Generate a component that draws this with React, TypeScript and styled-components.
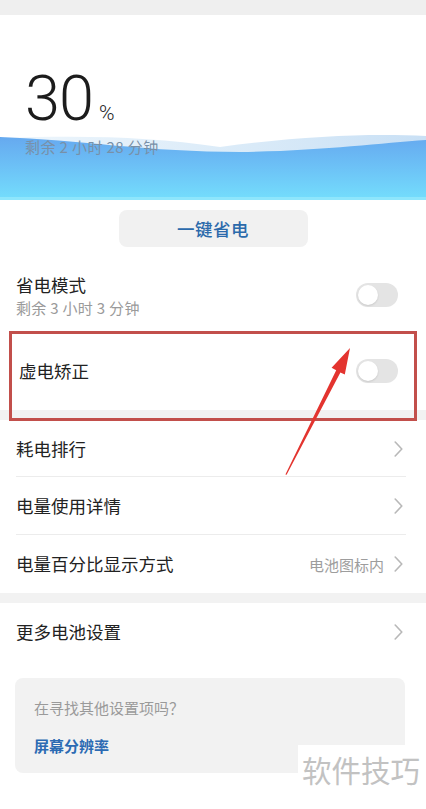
import React from "react";
import styled, { createGlobalStyle } from "styled-components";

const GlobalStyle = createGlobalStyle`
  html, body {
    margin: 0;
    padding: 0;
    background: #ffffff;
  }
  body {
    font-family: "Noto Sans CJK SC", "Noto Sans", sans-serif;
    color: #222;
  }
`;

const StPage = styled.main`
  position: relative;
  width: 426px;
  height: 809px;
  overflow: hidden;
  background: #fff;
  display: flex;
  flex-direction: column;
`;

const StTopBar = styled.div`
  height: 15px;
  background: #efefef;
  flex-shrink: 0;
`;

const StHero = styled.section`
  position: relative;
  height: 185px;
  flex-shrink: 0;
  overflow: hidden;
  background: #fff;
`;

const StWave = styled.svg`
  position: absolute;
  left: 0;
  bottom: 0;
  width: 426px;
  height: 66px;
  display: block;
`;

const StHeroText = styled.div`
  position: relative;
  padding: 52px 0 0 25px;
  display: flex;
  flex-direction: column;
`;

const StPercent = styled.div`
  display: flex;
  align-items: baseline;
  height: 63px;
  font-family: Roboto, "Liberation Sans", sans-serif;
  font-weight: 300;
  font-size: 63px;
  line-height: 63px;
  color: #1c1c1c;
  letter-spacing: -1px;
`;

const StUnit = styled.span`
  font-size: 21px;
  line-height: 1;
  margin-left: 6px;
  letter-spacing: 0;
`;

const StRemain = styled.div`
  margin-top: 7px;
  font-size: 15px;
  line-height: 20px;
  color: #7890a8;
  letter-spacing: 0.4px;
`;

const StButtonArea = styled.div`
  height: 58px;
  display: flex;
  justify-content: center;
  padding-top: 10px;
  box-sizing: border-box;
  flex-shrink: 0;
`;

const StSaveButton = styled.button`
  width: 189px;
  height: 37px;
  border: none;
  border-radius: 8px;
  background: #f1f1f1;
  color: #2b6aab;
  font-family: "Noto Sans CJK SC", sans-serif;
  font-size: 17.5px;
  font-weight: 500;
  letter-spacing: 0.5px;
  padding: 0;
  cursor: pointer;
`;

const StRow = styled.div<{ $height: number; $divider?: boolean; $indent?: number }>`
  position: relative;
  height: ${(p) => p.$height}px;
  flex-shrink: 0;
  display: flex;
  align-items: center;
  justify-content: space-between;
  padding: 0 23px 0 ${(p) => p.$indent ?? 16}px;
  box-sizing: border-box;
  &::after {
    content: "";
    display: ${(p) => (p.$divider ? "block" : "none")};
    position: absolute;
    left: 16px;
    right: 20px;
    bottom: 0;
    height: 1px;
    background: #ececec;
  }
`;

const StRowText = styled.div`
  display: flex;
  flex-direction: column;
  gap: 1px;
`;

const StTitle = styled.div`
  font-size: 17.5px;
  line-height: 24px;
  color: #222;
`;

const StSub = styled.div`
  font-size: 15px;
  line-height: 20px;
  color: #9a9a9a;
  letter-spacing: 0.3px;
`;

const StTrail = styled.div`
  display: flex;
  align-items: center;
  gap: 10px;
`;

const StValue = styled.span`
  font-size: 15px;
  color: #9d9d9d;
`;

const StToggle = styled.div`
  width: 42px;
  height: 24px;
  border-radius: 12px;
  background: #e4e4e4;
  margin-right: 5px;
  display: flex;
  align-items: center;
  padding: 0 2px;
  box-sizing: border-box;
`;

const StKnob = styled.div`
  width: 20px;
  height: 20px;
  border-radius: 50%;
  background: #fff;
  box-shadow: 0 1px 2px rgba(0, 0, 0, 0.12);
`;

const StGap = styled.div`
  height: 10px;
  background: #f2f2f2;
  flex-shrink: 0;
`;

const StCard = styled.section`
  margin: 18px 21px 0 15px;
  height: 95px;
  box-sizing: border-box;
  padding: 20px 19px 0;
  background: #f2f2f2;
  border-radius: 8px;
  display: flex;
  flex-direction: column;
  gap: 18px;
  flex-shrink: 0;
`;

const StHint = styled.div`
  font-size: 15px;
  line-height: 20px;
  color: #9a9a9a;
`;

const StLink = styled.div`
  font-size: 15px;
  line-height: 20px;
  font-weight: 700;
  color: #2c6bb3;
`;

const StHighlight = styled.div`
  position: absolute;
  left: 9px;
  top: 331px;
  width: 408px;
  height: 90px;
  box-sizing: border-box;
  border: 3px solid #c24f4b;
  pointer-events: none;
`;

const StArrow = styled.svg`
  position: absolute;
  left: 0;
  top: 0;
  width: 426px;
  height: 809px;
  pointer-events: none;
`;

const StWatermark = styled.div`
  position: absolute;
  left: 298px;
  top: 745px;
  width: 128px;
  height: 60px;
  background: #fff;
  display: flex;
  align-items: flex-start;
  padding: 6px 0 0 4px;
  box-sizing: border-box;
  font-size: 29.5px;
  line-height: 36px;
  color: #c2c2c2;
`;

function Chevron() {
  return (
    <svg width="9" height="16" viewBox="0 0 9 16">
      <path
        d="M1.2 1 L7.8 8 L1.2 15"
        fill="none"
        stroke="#b8b8b8"
        strokeWidth="1.6"
        strokeLinecap="round"
        strokeLinejoin="round"
      />
    </svg>
  );
}

function Toggle() {
  return (
    <StToggle>
      <StKnob />
    </StToggle>
  );
}

export default function App() {
  return (
    <>
      <GlobalStyle />
      <StPage>
        <StTopBar />
        <StHero>
          <StWave viewBox="0 0 426 66" preserveAspectRatio="none">
            <defs>
              <linearGradient id="waveBack" x1="0" y1="0" x2="1" y2="0">
                <stop offset="0" stopColor="#eef6fc" />
                <stop offset="0.6" stopColor="#d9eaf8" />
                <stop offset="1" stopColor="#c9e0f5" />
              </linearGradient>
              <linearGradient id="waveFront" x1="0" y1="0" x2="0" y2="1">
                <stop offset="0" stopColor="#66a9ef" />
                <stop offset="0.45" stopColor="#6cc0f6" />
                <stop offset="1" stopColor="#74defc" />
              </linearGradient>
            </defs>
            <path
              d="M0 4 C 90 1 150 3 220 13 C 300 2 370 -1 426 2 L426 66 L0 66 Z"
              fill="url(#waveBack)"
            />
            <path
              d="M0 3 C 80 6 150 18 240 18 C 320 17 380 9 426 6 L426 66 L0 66 Z"
              fill="url(#waveFront)"
            />
            <rect x="0" y="63" width="426" height="3" fill="#8ee6fc" />
          </StWave>
          <StHeroText>
            <StPercent>
              30<StUnit>%</StUnit>
            </StPercent>
            <StRemain>剩余 2 小时 28 分钟</StRemain>
          </StHeroText>
        </StHero>

        <StButtonArea>
          <StSaveButton>一键省电</StSaveButton>
        </StButtonArea>

        <StRow $height={74}>
          <StRowText>
            <StTitle>省电模式</StTitle>
            <StSub>剩余 3 小时 3 分钟</StSub>
          </StRowText>
          <Toggle />
        </StRow>
        <StRow $height={78} $indent={19}>
          <StTitle>虚电矫正</StTitle>
          <Toggle />
        </StRow>
        <StGap />

        <StRow $height={57} $divider>
          <StTitle>耗电排行</StTitle>
          <Chevron />
        </StRow>
        <StRow $height={58} $divider>
          <StTitle>电量使用详情</StTitle>
          <Chevron />
        </StRow>
        <StRow $height={58}>
          <StTitle>电量百分比显示方式</StTitle>
          <StTrail>
            <StValue>电池图标内</StValue>
            <Chevron />
          </StTrail>
        </StRow>
        <StGap />

        <StRow $height={57}>
          <StTitle>更多电池设置</StTitle>
          <Chevron />
        </StRow>

        <StCard>
          <StHint>在寻找其他设置项吗？</StHint>
          <StLink>屏幕分辨率</StLink>
        </StCard>

        <StHighlight />
        <StArrow viewBox="0 0 426 809">
          <polygon
            points="285.4,474.4 336.2,370.2 331.6,367.8 350,348 344.8,374.6 340.4,372.4 286.6,474.8"
            fill="#e3342f"
          />
        </StArrow>
        <StWatermark>软件技巧</StWatermark>
      </StPage>
    </>
  );
}
